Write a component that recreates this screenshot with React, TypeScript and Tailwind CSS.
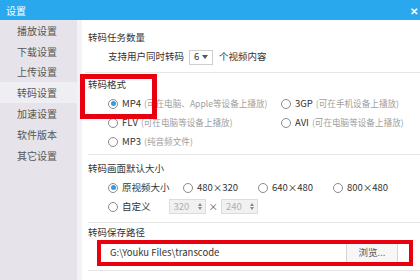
import React from 'react';

const font = { fontFamily: '"Noto Sans CJK SC", "Noto Sans", sans-serif' };

const menu = ['播放设置', '下载设置', '上传设置', '转码设置', '加速设置', '软件版本', '其它设置'];

const Radio: React.FC<{ checked?: boolean }> = ({ checked }) => (
    <span className="w-[10px] h-[10px] rounded-full border border-[#8a8a8a] bg-white flex items-center justify-center shrink-0">
        {checked && <span className="w-[5px] h-[5px] rounded-full bg-[#2f9fe3]"></span>}
    </span>
);

const Option: React.FC<{ label: string; hint?: string; checked?: boolean; width?: string }> = ({ label, hint, checked, width }) => (
    <div className={`flex items-center whitespace-nowrap ${width ?? ''}`}>
        <Radio checked={checked} />
        <span className="ml-[4px] text-[#333]">{label}</span>
        {hint && <span className="ml-[3px] text-[8.6px] text-[#a0a0a0]">{hint}</span>}
    </div>
);

const Spin: React.FC<{ value: string }> = ({ value }) => (
    <div className="w-[37px] h-[15px] bg-[#f1f1f1] border border-[#dcdcdc] flex items-center justify-between pl-[4px] pr-[3px]">
        <span className="text-[#b0b0b0]">{value}</span>
        <span className="flex flex-col items-center gap-[1px]">
            <span className="w-0 h-0 border-l-[2px] border-r-[2px] border-b-[3px] border-l-transparent border-r-transparent border-b-[#888]"></span>
            <span className="w-0 h-0 border-l-[2px] border-r-[2px] border-t-[3px] border-l-transparent border-r-transparent border-t-[#888]"></span>
        </span>
    </div>
);

const App: React.FC = () => {
    return (
        <div className="w-[420px] h-[280px] overflow-hidden relative bg-white flex flex-col" style={font}>
            <div className="h-[20px] bg-[#2aa8ee] flex items-center justify-between pl-[6px] text-white text-[10px] shrink-0">
                <span>设置</span>
                <span className="text-[10px] font-bold mr-[2px]">✕</span>
            </div>

            <div className="flex flex-1">
                <div className="w-[77px] bg-[#e6e4ea] text-[10px] text-[#555]">
                    {menu.map((item) => (
                        <div
                            key={item}
                            className={`h-[20.8px] flex items-center pl-[17px] ${item === '转码设置' ? 'bg-[#efeef2]' : ''}`}
                        >
                            {item}
                        </div>
                    ))}
                </div>
                <div className="w-[5px] bg-[#f3f2f5]"></div>

                <div className="flex-1 text-[9.5px] text-[#333] leading-none">
                    {/* 转码任务数量 */}
                    <div className="pt-[11px] pl-[6px] h-[14px] box-content flex items-center">转码任务数量</div>
                    <div className="mt-[3px] h-[18px] pl-[26px] flex items-center">
                        <span>支持用户同时转码</span>
                        <div className="ml-[5px] w-[24px] h-[15px] border border-[#cfcfcf] flex items-center justify-between px-[4px]">
                            <span>6</span>
                            <span className="w-0 h-0 border-l-[3px] border-r-[3px] border-t-[4px] border-l-transparent border-r-transparent border-t-[#555]"></span>
                        </div>
                        <span className="ml-[6px]">个视频内容</span>
                    </div>
                    <div className="mt-[6px] ml-[3px] border-b border-[#e6e6e6]"></div>

                    {/* 转码格式 */}
                    <div className="mt-[5px] pl-[6px] h-[14px] flex items-center">转码格式</div>
                    <div className="mt-[2px] pl-[26px]">
                        <div className="h-[19px] flex items-center">
                            <Option label="MP4" hint="(可在电脑、Apple等设备上播放)" checked width="w-[173px]" />
                            <Option label="3GP" hint="(可在手机设备上播放)" />
                        </div>
                        <div className="h-[19px] flex items-center">
                            <Option label="FLV" hint="(可在电脑等设备上播放)" width="w-[173px]" />
                            <Option label="AVI" hint="(可在电脑等设备上播放)" />
                        </div>
                        <div className="h-[19px] flex items-center">
                            <Option label="MP3" hint="(纯音频文件)" />
                        </div>
                    </div>
                    <div className="mt-[3px] ml-[6px] border-b border-[#e6e6e6]"></div>

                    {/* 转码画面默认大小 */}
                    <div className="mt-[7px] pl-[6px] h-[14px] flex items-center">转码画面默认大小</div>
                    <div className="mt-[2px] pl-[26px]">
                        <div className="h-[19px] flex items-center">
                            <Option label="原视频大小" checked width="w-[75px]" />
                            <Option label="480×320" width="w-[75px]" />
                            <Option label="640×480" width="w-[75px]" />
                            <Option label="800×480" />
                        </div>
                        <div className="h-[19px] flex items-center">
                            <Option label="自定义" />
                            <div className="ml-[18px]"><Spin value="320" /></div>
                            <span className="mx-[3px] text-[#666]">×</span>
                            <Spin value="240" />
                        </div>
                    </div>
                    <div className="mt-[6px] ml-[6px] border-b border-[#e6e6e6]"></div>

                    {/* 转码保存路径 */}
                    <div className="mt-[3px] pl-[6px] h-[14px] flex items-center">转码保存路径</div>
                    <div className="mt-[3px] ml-[18px] h-[20px] flex w-[300px]">
                        <div className="w-[247px] border border-[#d6d6d6] flex items-center pl-[9px] text-[#333]">
                            G:\Youku Files\transcode
                        </div>
                        <div className="w-[51px] border border-l-0 border-[#d6d6d6] bg-[#f7f7f7] flex items-center justify-center text-[#555]">
                            浏览...
                        </div>
                    </div>
                    <div className="mt-[7px] ml-[6px] border-b border-[#e6e6e6]"></div>
                </div>
            </div>

            {/* red annotation boxes */}
            <div className="absolute left-[80px] top-[74px] w-[77px] h-[45px] border-[5px] border-[#e8000e]"></div>
            <div className="absolute left-[97px] top-[240px] w-[316px] h-[26px] border-[4px] border-[#e8000e]"></div>
        </div>
    );
};

export default App;
